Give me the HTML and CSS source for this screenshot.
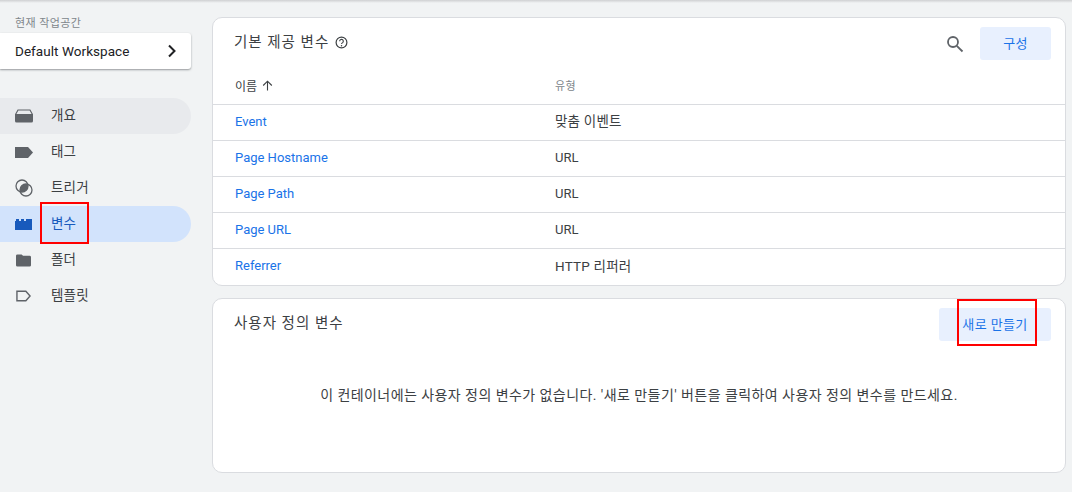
FILE: index.html
```html
<!DOCTYPE html>
<html lang="ko">
<head>
<meta charset="utf-8">
<title>변수</title>
<link rel="stylesheet" href="styles.css">
</head>
<body>
<div class="topline"></div>
<div class="app">
  <aside class="sidebar">
    <div class="ws-label">현재 작업공간</div>
    <div class="ws-card">
      <span class="ws-name">Default Workspace</span>
      <svg class="ws-chev" width="10" height="14" viewBox="0 0 10 14"><path d="M2 1.500 7.500 7 2 12.500" fill="none" stroke="#202124" stroke-width="2"/></svg>
    </div>
    <nav class="nav">
      <div class="nav-item hover">
        <span class="nav-icon"><svg width="18" height="14" viewBox="0 0 18 14"><path d="M3 1h12l2.500 4.500H.5z" fill="none" stroke="#5f6368" stroke-width="1.200"/><path d="M0 5h18v7a1.500 1.500 0 0 1-1.500 1.500h-15A1.500 1.500 0 0 1 0 12z" fill="#5f6368"/></svg></span>
        <span class="nav-text">개요</span>
      </div>
      <div class="nav-item">
        <span class="nav-icon"><svg width="18" height="11" viewBox="0 0 18 11"><path d="M0 0h13l5 5.500-5 5.500H0z" fill="#5f6368"/></svg></span>
        <span class="nav-text">태그</span>
      </div>
      <div class="nav-item">
        <span class="nav-icon"><svg width="18" height="18" viewBox="0 0 18 18"><circle cx="7" cy="7" r="6" fill="none" stroke="#5f6368" stroke-width="1.300"/><circle cx="11" cy="11" r="6" fill="none" stroke="#5f6368" stroke-width="1.300"/><path d="M12.740 5.260A6 6 0 0 1 5.260 12.740 6 6 0 0 1 12.740 5.260z" fill="#5f6368"/></svg></span>
        <span class="nav-text">트리거</span>
      </div>
      <div class="nav-item active">
        <span class="nav-icon"><svg width="18" height="11" viewBox="0 0 18 11"><path d="M0 2h1V0h3v2h2V0h3v2h2V0h3v2h3v9H0z" fill="#185abc"/><path d="M14 2V0h3v2z" fill="#185abc"/></svg></span>
        <span class="nav-text">변수</span>
      </div>
      <div class="nav-item">
        <span class="nav-icon inset"><svg width="15" height="13" viewBox="0 0 16 13"><path d="M1.500 0H6l1.500 1.500h7A1.500 1.500 0 0 1 16 3v8.500a1.500 1.500 0 0 1-1.500 1.500h-13A1.500 1.500 0 0 1 0 11.500v-10A1.500 1.500 0 0 1 1.500 0z" fill="#5f6368"/></svg></span>
        <span class="nav-text">폴더</span>
      </div>
      <div class="nav-item">
        <span class="nav-icon inset"><svg width="15" height="12" viewBox="0 0 16 12"><path d="M1 1h9.500L15 6l-4.500 5H1z" fill="none" stroke="#5f6368" stroke-width="1.500"/></svg></span>
        <span class="nav-text">템플릿</span>
      </div>
    </nav>
  </aside>
  <main class="main">
    <section class="card card-builtin">
      <header class="card-head">
        <div class="title-wrap">
          <h2 class="card-title">기본 제공 변수</h2>
          <svg class="help" width="13" height="13" viewBox="0 0 13 13"><circle cx="6.500" cy="6.500" r="5.400" fill="none" stroke="#3c4043" stroke-width="1.200"/><path d="M4.700 5.200a1.800 1.800 0 1 1 2.900 1.400c-.7.5-1.100.8-1.100 1.500" fill="none" stroke="#3c4043" stroke-width="1.100"/><circle cx="6.500" cy="9.700" r=".75" fill="#3c4043"/></svg>
        </div>
        <div class="head-actions">
          <svg class="search" width="18" height="18" viewBox="0 0 18 18"><circle cx="7" cy="7" r="5" fill="none" stroke="#5f6368" stroke-width="1.800"/><path d="M10.800 10.800 16.500 16.500" stroke="#5f6368" stroke-width="1.800"/></svg>
          <button class="btn btn-config">구성</button>
        </div>
      </header>
      <div class="row row-head">
        <div class="col-name">이름 <svg class="sort" width="11" height="11" viewBox="0 0 11 11"><path d="M5.500 10.500V1.500M1.200 5.500 5.500 1.200 9.800 5.500" fill="none" stroke="#3c4043" stroke-width="1.100"/></svg></div>
        <div class="col-type muted">유형</div>
      </div>
      <div class="row"><a class="col-name link">Event</a><div class="col-type ko">맞춤 이벤트</div></div>
      <div class="row"><a class="col-name link">Page Hostname</a><div class="col-type">URL</div></div>
      <div class="row"><a class="col-name link">Page Path</a><div class="col-type">URL</div></div>
      <div class="row"><a class="col-name link">Page URL</a><div class="col-type">URL</div></div>
      <div class="row"><a class="col-name link">Referrer</a><div class="col-type ko">HTTP 리퍼러</div></div>
    </section>
    <section class="card card-custom">
      <header class="card-head custom-head">
        <h2 class="card-title">사용자 정의 변수</h2>
        <button class="btn btn-new">새로 만들기</button>
      </header>
      <p class="empty">이 컨테이너에는 사용자 정의 변수가 없습니다. '새로 만들기' 버튼을 클릭하여 사용자 정의 변수를 만드세요.</p>
    </section>
  </main>
</div>
<div class="mark mark-nav"></div>
<div class="mark mark-btn"></div>
</body>
</html>
```
FILE: styles.css
```css
* { box-sizing: border-box; }
html, body { margin: 0; height: 100%; }
body {
  position: relative;
  width: 1072px;
  height: 492px;
  overflow: hidden;
  background: #f1f3f4;
  color: #3c4043;
  font: 13px/20px Roboto, "Noto Sans CJK KR", sans-serif;
}
.topline {
  height: 3px;
  background: linear-gradient(#cfd0d2, #f1f3f4);
}
.app { display: flex; margin-top: -1px; }
.sidebar { width: 212px; flex: none; }
.ws-label {
  padding: 14px 0 0 15px;
  height: 31px;
  font-size: 11px;
  line-height: 16px;
  letter-spacing: .4px;
  color: #80868b;
}
.ws-name { font-size: 13.500px; letter-spacing: .05px; }
.ws-card {
  width: 191px;
  height: 36px;
  padding: 0 14px 0 15px;
  display: flex;
  align-items: center;
  justify-content: space-between;
  background: #fff;
  border-radius: 0 3px 3px 0;
  box-shadow: 0 1px 2px rgba(60, 64, 67, .5);
  color: #202124;
}
.nav { margin-top: 29px; }
.nav-item {
  width: 191px;
  height: 36px;
  display: flex;
  align-items: center;
  border-radius: 0 18px 18px 0;
}
.nav-item.hover { background: #e8eaed; }
.nav-item.active { background: #d2e3fc; color: #185abc; }
.nav-text { font-size: 13.500px; letter-spacing: .2px; margin-top: -2px; }
.nav-icon {
  width: 51px;
  padding-left: 15px;
  flex: none;
  display: flex;
  align-items: center;
}
.nav-icon.inset { padding-left: 16px; }
.nav-icon svg { display: block; }
.main { width: 854px; padding-top: 15px; }
.card {
  background: #fff;
  border: 1px solid #dadce0;
  border-radius: 10px;
}
.card-builtin { height: 269px; }
.card-custom { height: 175px; margin-top: 12px; }
.card-head {
  display: flex;
  justify-content: space-between;
  align-items: flex-start;
  padding: 9px 14px 0 21px;
  height: 49px;
}
.title-wrap { display: flex; align-items: center; height: 30px; }
.card-title {
  margin: 0;
  padding-top: 1px;
  font-size: 14.500px;
  font-weight: 400;
  line-height: 30px;
  letter-spacing: 1px;
  color: #3c4043;
}
.help { margin-left: 6px; }
.head-actions { display: flex; align-items: center; }
.search { margin-right: 16px; }
.btn {
  border: 0;
  border-radius: 3px;
  background: #e8f0fe;
  color: #1a73e8;
  font: inherit;
  height: 33px;
  padding: 0;
  letter-spacing: .4px;
}
.btn-config { width: 71px; }
.btn-new { width: 112px; height: 33px; margin-top: 0; }
.custom-head { padding-top: 9px; }
.row {
  height: 36px;
  padding: 0 0 2px 22px;
  display: flex;
  align-items: center;
  border-bottom: 1px solid #dadce0;
}
.row:last-child { border-bottom: 0; }
.row-head { height: 38px; padding: 2px 0 0 22px; font-size: 12px; }
.col-name { width: 320px; flex: none; display: flex; align-items: center; }
.col-type { flex: 1; }
.ko { font-size: 13.500px; letter-spacing: .2px; margin-top: -1px; }
.sort { margin: -2px 0 0 5px; }
.muted { color: #80868b; font-size: 11px; letter-spacing: .5px; }
.link { color: #1a73e8; }
.empty {
  margin: 37px 0 0;
  text-align: center;
  color: #3c4043;
  font-size: 14px;
  letter-spacing: .44px;
  line-height: 20px;
}
.mark {
  position: absolute;
  border: 2px solid #f00;
}
.mark-nav { left: 40px; top: 202px; width: 49px; height: 42px; }
.mark-btn { left: 957px; top: 299px; width: 80px; height: 47px; }
```
